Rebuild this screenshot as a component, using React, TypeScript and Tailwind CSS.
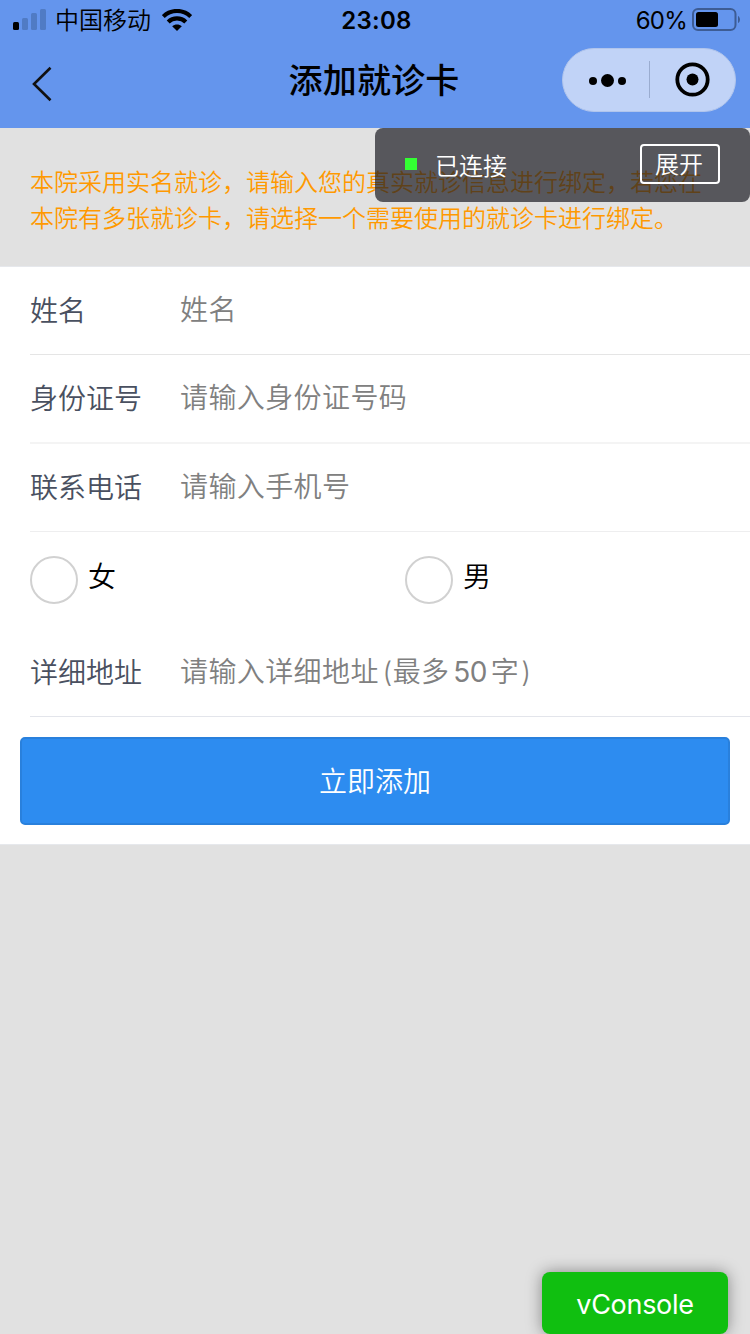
import type { ReactNode } from 'react'

const SANS = "font-['Inter','Noto_Sans_CJK_SC',sans-serif]"

const FIELDS = [
  { label: '姓名', hint: '姓名', row: 'h-[88px] border-b border-[#e5e5e5]' },
  { label: '身份证号', hint: '请输入身份证号码', row: 'h-[89px] border-b-2 border-[#f4f4f4]' },
  { label: '联系电话', hint: '请输入手机号', row: 'h-[88px] border-b border-[#eeeeef]' },
]

function Signal() {
  return (
    <svg width="34" height="22" viewBox="0 0 34 22">
      <rect x="0" y="13" width="6" height="8" rx="1.5" fill="#000" />
      <g fill="#507bc4">
        <rect x="9" y="9" width="6" height="12" rx="1.5" />
        <rect x="18" y="4" width="6" height="17" rx="1.5" />
        <rect x="27" y="0" width="6" height="21" rx="1.5" />
      </g>
    </svg>
  )
}

function Wifi() {
  return (
    <svg width="30" height="22" viewBox="0 0 30 22" fill="none" stroke="#000">
      <path d="M1.3 7.6C9 .1 21 .1 28.7 7.6" strokeWidth="4.2" />
      <path d="M6.2 12.9c4.8-4.7 12.8-4.7 17.6 0" strokeWidth="4.2" />
      <path d="M10.2 17.3c2.7-2.4 6.9-2.4 9.6 0L15 22Z" fill="#000" stroke="none" />
    </svg>
  )
}

function Battery() {
  return (
    <svg width="48" height="24" viewBox="0 0 48 24">
      <rect x="1" y="1" width="42.5" height="21" rx="5" fill="none" stroke="#3d5c94" strokeWidth="2" />
      <rect x="4" y="4" width="22" height="15" rx="2.5" fill="#000" />
      <path d="M46 8c2.6 1 2.6 6 0 7Z" fill="#3d5c94" />
    </svg>
  )
}

function Field({ label, hint, row }: { label: string; hint: ReactNode; row: string }) {
  return (
    <div className={`ml-[30px] flex items-center text-[28px] leading-10 ${row}`}>
      <span className="w-[150px] text-[#495060]">{label}</span>
      <span className="-mt-0.5 tracking-[0.4px] text-[#808080] [word-spacing:-4.5px]">{hint}</span>
    </div>
  )
}

function Radio({ label }: { label: string }) {
  return (
    <label className="flex flex-1 items-center gap-2.5 pl-[30px]">
      <span className="size-12 rounded-full border-2 border-[#d1d1d1] bg-white" />
      <span className="-mt-1.5 text-[28px] leading-10 text-black">{label}</span>
    </label>
  )
}

export default function App() {
  return (
    <div className={`relative flex h-[1334px] w-[750px] flex-col overflow-hidden bg-[#e1e1e1] font-[350] ${SANS}`}>
      <header className="h-32 bg-[#6495ed] text-black">
        <div className="grid h-10 grid-cols-3 items-center pr-2.5 pl-[13px]">
          <div className="flex items-center">
            <Signal />
            <span className="ml-2 pt-0.5 text-2xl leading-[38px]">中国移动</span>
            <span className="ml-[11px]">
              <Wifi />
            </span>
          </div>
          <span className="pt-0.5 text-center text-2xl leading-[38px] font-semibold tracking-[0.3px]">23:08</span>
          <div className="flex items-center justify-end gap-[5px]">
            <span className="pt-0.5 text-2xl leading-[38px] font-normal tracking-[-0.8px]">60%</span>
            <Battery />
          </div>
        </div>
        <div className="grid h-20 grid-cols-3 items-center pr-3.5 pl-[31px]">
          <svg className="mt-2" width="22" height="36" viewBox="0 0 22 36" fill="none" stroke="#111" strokeWidth="2.6">
            <path d="M19.5 1.8 3 18l16.5 16.2" />
          </svg>
          <h1 className="mt-0.5 -ml-[19px] text-center text-[34px] leading-[48px] font-medium tracking-[0.2px] whitespace-nowrap">
            添加就诊卡
          </h1>
          <div className="flex h-16 w-[174px] items-center justify-self-end rounded-full border border-[#b1c5ec] bg-[#c1d3f7]">
            <svg className="w-[86px]" height="40" viewBox="0 0 86 40">
              <circle cx="30" cy="21" r="4" />
              <circle cx="44.5" cy="20.5" r="6.5" />
              <circle cx="59" cy="21" r="4" />
            </svg>
            <span className="mb-0.5 h-[37px] w-px bg-[#9aacd0]" />
            <svg className="w-[85px]" height="40" viewBox="0 0 85 40">
              <circle cx="42.5" cy="19.5" r="15.2" fill="none" stroke="#000" strokeWidth="3.8" />
              <circle cx="42.5" cy="19.5" r="6" />
            </svg>
          </div>
        </div>
      </header>

      <p className="h-[138px] px-[30px] pt-[36.5px] text-2xl leading-9 text-[#ff9900]">
        本院采用实名就诊，请输入您的真实就诊信息进行绑定，若您在本院有多张就诊卡，请选择一个需要使用的就诊卡进行绑定。
      </p>

      <main className="h-[579px] border-y border-[#e6e8ec] bg-white">
        {FIELDS.map((f) => (
          <Field key={f.label} {...f} />
        ))}
        <div className="flex h-24">
          <Radio label="女" />
          <Radio label="男" />
        </div>
        <Field
          label="详细地址"
          hint={
            <>
              请输入详细地址 (最多 <span className="font-normal tracking-[-0.5px]">50</span> 字<span className="ml-0.5">)</span>
            </>
          }
          row="h-[89px] border-b border-[#e3e5eb] pt-0.5"
        />
        <button className="mx-5 mt-5 block h-[88px] w-[710px] rounded-[5px] border-2 border-[#2980dc] bg-[#2d8cf0] pt-0.5 text-[28px] leading-10 text-white">
          立即添加
        </button>
      </main>

      {/* 调试连接状态 */}
      <div className="absolute top-32 right-0 flex h-[74px] w-[375px] items-start rounded-lg bg-[rgba(28,29,35,0.7)] px-[30px] text-2xl text-white">
        <span className="mt-[30px] size-3 bg-[#33ff33]" />
        <span className="mt-[21px] ml-[18px] leading-9">已连接</span>
        <button className="mt-4 ml-auto h-10 w-20 rounded border-2 border-white pt-0.5 pr-0.5 leading-[34px]">展开</button>
      </div>

      <button className="absolute right-[22px] bottom-0 h-[62px] w-[186px] rounded-lg bg-[#10bf10] pt-1 text-[27px] font-normal tracking-[-0.3px] text-white shadow-[0_0_16px_rgba(0,0,0,0.4)]">
        vConsole
      </button>
    </div>
  )
}
